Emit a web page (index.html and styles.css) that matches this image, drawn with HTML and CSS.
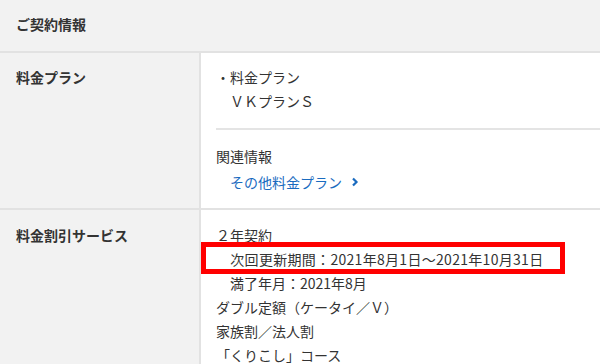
FILE: index.html
```html
<!DOCTYPE html>
<html lang="ja">
<head>
<meta charset="utf-8">
<link rel="stylesheet" href="styles.css">
</head>
<body>
<div class="panel">
  <div class="head">ご契約情報</div>
  <div class="row row-plan">
    <div class="label">料金プラン</div>
    <div class="value">
      <div class="line">・料金プラン</div>
      <div class="line">　ＶＫプランＳ</div>
      <div class="divider"></div>
      <div class="line related">関連情報</div>
      <div class="line link">　<span class="link-text">その他料金プラン</span><svg class="chev" width="8" height="10" viewBox="0 0 8 10"><path d="M2 1.5 L5.5 5 L2 8.5" fill="none" stroke="#1a6bbf" stroke-width="2.2"/></svg></div>
    </div>
  </div>
  <div class="row row-disc">
    <div class="label">料金割引サービス</div>
    <div class="value">
      <div class="line">２年契約</div>
      <div class="line hl">　次回更新期間：2021年8月1日～2021年10月31日<span class="mark"></span></div>
      <div class="line">　満了年月：2021年8月</div>
      <div class="line">ダブル定額（ケータイ／Ｖ）</div>
      <div class="line">家族割／法人割</div>
      <div class="line">「くりこし」コース</div>
    </div>
  </div>
</div>
</body>
</html>
```
FILE: styles.css
```css
html, body {
  margin: 0;
  padding: 0;
  background: #fff;
}
body {
  font-family: "Noto Sans CJK JP", "Noto Sans", sans-serif;
  font-size: 14px;
  color: #333;
  overflow: hidden;
  width: 600px;
  height: 364px;
}
.panel {
  width: 600px;
}
.head {
  height: 53px;
  box-sizing: border-box;
  background: #f2f2f2;
  border-bottom: 2px solid #e2e2e2;
  padding-left: 16px;
  font-weight: bold;
  line-height: 48px;
}
.row {
  display: grid;
  grid-template-columns: 201px 1fr;
  border-bottom: 2px solid #e2e2e2;
}
.label {
  background: #f2f2f2;
  border-right: 2px solid #e2e2e2;
  padding: 12px 0 0 16px;
  font-weight: bold;
  line-height: 24px;
}
.value {
  padding: 12px 0 14px 15px;
}
.line {
  line-height: 24px;
  white-space: nowrap;
}
.divider {
  height: 2px;
  background: #e4e4e4;
  margin: 15px 0 0 0;
}
.related {
  margin-top: 14px;
}
.link {
  margin-top: 2px;
  color: #1a6bbf;
  display: flex;
  align-items: center;
}
.chev {
  margin-left: 9px;
}
.row-disc {
  border-bottom: none;
}
.row-disc .label {
  padding-top: 13px;
  height: 200px;
}
.row-disc .value {
  padding-top: 13px;
}
.hl {
  position: relative;
  letter-spacing: 0.3px;
}
.mark {
  position: absolute;
  left: -15px;
  top: -5px;
  width: 364px;
  height: 32px;
  box-sizing: border-box;
  border: 5px solid #f00;
}
```
